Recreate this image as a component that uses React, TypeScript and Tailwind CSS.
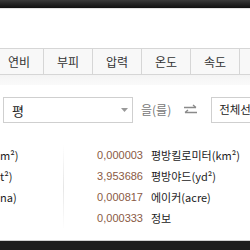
const tabs = ["", "연비", "부피", "압력", "온도", "속도", ""];

const rows = [
  { left: "m²)", num: "0,000003", label: "평방킬로미터(km²)" },
  { left: "t²)", num: "3,953686", label: "평방야드(yd²)" },
  { left: "na)", num: "0,000817", label: "에이커(acre)" },
  { left: "", num: "0,000333", label: "정보" },
];

const font = { fontFamily: '"Noto Sans CJK KR", "Liberation Sans", sans-serif' };

const App = () => {
  return (
    <div className="w-[250px] h-[250px] overflow-hidden bg-white flex flex-col text-[#333]" style={font}>

      {/* Top bar */}
      <div className="h-[8px] bg-gradient-to-b from-[#3a3a3a] to-[#111] shrink-0" />
      <div className="h-[1px] bg-[#e2e2e2] shrink-0" />

      <div className="h-[39px] shrink-0" />

      {/* Tabs */}
      <div className="flex -ml-[54px] border-y border-[#d6d6d6] bg-[#f8f8f8] h-[27px] shrink-0">
        {tabs.map((t, i) => (
          <div key={i} className="w-[49px] shrink-0 border-r border-[#d6d6d6] flex items-center justify-center text-[12px] leading-none">
            {t}
          </div>
        ))}
      </div>

      <div className="h-[10px] bg-gradient-to-b from-[#f4f4f4] to-[#fafafa] shrink-0" />

      {/* Select row */}
      <div className="flex items-center mt-[12px] h-[26px] shrink-0 whitespace-nowrap">
        <div className="ml-[3px] w-[130px] shrink-0 h-[26px] border border-[#cfcfcf] flex items-center justify-between pl-[8px] pr-[4px] bg-white">
          <span className="text-[13px] leading-none text-[#222]">평</span>
          <svg width="7" height="4" viewBox="0 0 7 4"><path d="M0 0h7L3.5 4z" fill="#999" /></svg>
        </div>
        <span className="ml-[8px] shrink-0 text-[12px] text-[#777] leading-none">을(를)</span>
        <svg className="ml-[12px] shrink-0" width="15" height="12" viewBox="0 0 15 12" fill="none" stroke="#8a8a8a" strokeWidth="1.3">
          <path d="M1 3.5h12M10 1l3 2.5" />
          <path d="M14 8.5H2M5 6l-3 2.5" />
        </svg>
        <div className="ml-[13px] h-[26px] w-[80px] shrink-0 border border-[#cfcfcf] flex items-center pl-[7px] bg-white">
          <span className="text-[11.5px] leading-none text-[#222]">전체선택</span>
        </div>
      </div>

      {/* Results */}
      <div className="flex mt-[21px] shrink-0">
        <div className="w-[63px] shrink-0 flex flex-col gap-[4px] py-[3px]">
          {rows.map((r, i) => (
            <div key={i} className="h-[17px] whitespace-nowrap text-[11px] leading-[17px] text-[#222]">
              {r.left}
            </div>
          ))}
        </div>
        <div className="w-[1px] bg-gradient-to-b from-[#fff] via-[#e6e6e6] to-[#fff] shrink-0" />
        <div className="flex flex-col gap-[4px] py-[3px]">
          {rows.map((r, i) => (
            <div key={i} className="flex h-[17px] items-center whitespace-nowrap leading-[17px]">
              <span className="w-[79px] text-right text-[11px] text-[#8a5a44]" style={{ fontFamily: '"Liberation Sans", sans-serif' }}>{r.num}</span>
              <span className="ml-[8px] text-[11px] text-[#222]">{r.label}</span>
            </div>
          ))}
        </div>
      </div>

      <div className="flex-1" />

      {/* Bottom bar */}
      <div className="h-[1px] bg-[#d0d0d0] shrink-0" />
      <div className="h-[9px] bg-[#1e1e1e] shrink-0" />
    </div>
  );
};

export default App;
